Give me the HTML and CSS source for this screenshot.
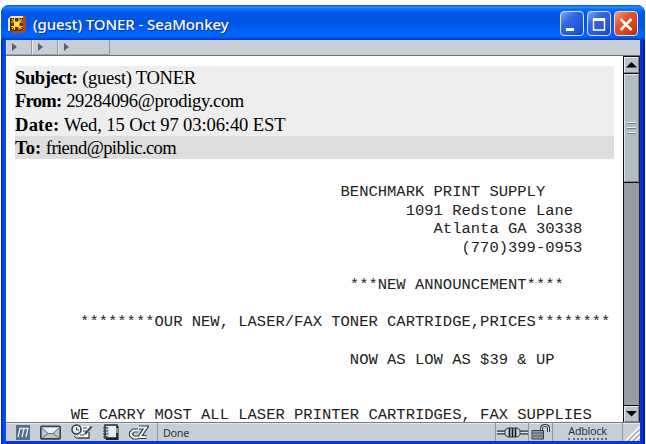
FILE: index.html
```html
<!DOCTYPE html>
<html lang="en">
<head>
<meta charset="utf-8">
<title>(guest) TONER - SeaMonkey</title>
<link rel="stylesheet" href="styles.css">
</head>
<body>
<div class="window">
  <header class="titlebar">
    <svg class="app-icon" width="18" height="18" viewBox="0 0 18 18">
      <path d="M3 1h14l1 1v13l-2 3H4z" fill="#b5481e"/>
      <path d="M0 4l3-3h12v3L4 16H0z" fill="#eadfc9"/>
      <path d="M2 3h13v12l-2 1H2z" fill="#5c2c14"/>
      <path d="M6.500 3v12M11 3v12M3 7h12M3 11.500h12M4 4l10 10M14 4L4 14" stroke="#ffc81e" stroke-width="1.100"/>
      <path d="M6.500 7H11v4.500H6.500z" fill="#ffee3c"/>
    </svg>
    <h1 class="title">(guest) TONER - SeaMonkey</h1>
    <div class="controls">
      <button class="control" aria-label="Minimize"><svg width="24" height="24"><path d="M6 16h8v3H6z" fill="#fff"/></svg></button>
      <button class="control" aria-label="Maximize"><svg width="24" height="24"><path d="M6.500 7h11v11h-11z" fill="none" stroke="#fff" stroke-width="1.400"/><path d="M6 7.500h12" stroke="#fff" stroke-width="3"/></svg></button>
      <button class="control close" aria-label="Close"><svg width="24" height="24"><path d="M6.500 7l11 11M17.500 7l-11 11" stroke="#fff" stroke-width="2.500"/></svg></button>
    </div>
  </header>
  <div class="toolbar">
    <span class="grip"></span><span class="grip"></span><span class="grip wide"></span>
  </div>
  <main class="content">
    <div class="message">
      <div class="headers">
        <div class="field subject"><b>Subject:</b> <span>(guest) TONER</span></div>
        <div class="field from"><b>From:</b> <span>29284096@prodigy.com</span></div>
        <div class="field date"><b>Date:</b> <span>Wed, 15 Oct 97 03:06:40 EST</span></div>
        <div class="field to"><b>To:</b> <span>friend@piblic.com</span></div>
      </div>
<pre class="body">
                                   BENCHMARK PRINT SUPPLY
                                          1091 Redstone Lane
                                             Atlanta GA 30338
                                                (770)399-0953

                                    ***NEW ANNOUNCEMENT****

       ********OUR NEW, LASER/FAX TONER CARTRIDGE,PRICES********

                                    NOW AS LOW AS $39 &amp; UP


      WE CARRY MOST ALL LASER PRINTER CARTRIDGES, FAX SUPPLIES</pre>
    </div>
    <div class="scrollbar">
      <div class="arrow"><svg width="15" height="15"><path d="M2 10.500h11L7.500 5z" fill="#000"/></svg></div>
      <div class="thumb"><i></i><i></i><i></i></div>
      <div class="track"></div>
      <div class="arrow"><svg width="15" height="15"><path d="M2 5h11L7.500 10.500z" fill="#000"/></svg></div>
    </div>
  </main>
  <footer class="statusbar">
    <div class="components">
      <svg width="14" height="15" viewBox="0 0 14 15"><path d="M0 0h14v15H0z" fill="#56708b"/><path d="M2 12l2-8.500h8L10 12M7.800 4L6 12" fill="none" stroke="#e4edf5" stroke-width="1.300"/></svg>
      <svg width="21" height="15" viewBox="0 0 21 15"><rect x=".8" y="1.300" width="19.400" height="12.600" rx="1" fill="#b9c6cf" stroke="#36434b" stroke-width="1.600"/><path d="M3 3l5 5h5l5-5z" fill="#edf2f5"/><path d="M2 3l6 5.500h5L19 3M2 13l6-4.500M19 13l-6-4.500" fill="none" stroke="#63727c"/></svg>
      <svg width="22" height="16" viewBox="0 0 22 16"><path d="M8 2h10v12H7z" fill="#f4f6f7"/><path d="M7 14h11V8" fill="none" stroke="#374149" stroke-width="1.300"/><circle cx="5.500" cy="5.500" r="4.500" fill="#e6ecef" stroke="#384148" stroke-width="1.600"/><path d="M5.500 3v3H8M3 12l2 2h2M9 11h4M12 4h4M12 7h3" fill="none" stroke="#424c52"/><path d="M13 11l1-3 6-6 1.500 1-6 7z" fill="#414b52"/></svg>
      <svg width="16" height="16" viewBox="0 0 16 16"><path d="M2 1h12v13H2z" fill="#c6d0dc" stroke="#232f37" stroke-width="1.500"/><path d="M6 2h7v11H6z" fill="#e4ebf1"/><path d="M0 4h5M0 7h5M0 10h5M0 13h5" stroke="#303941"/><path d="M14.500 2v13H3" fill="none" stroke="#172530" stroke-width="2"/><path d="M14 4v5" stroke="#bdb74d" stroke-width="1.500"/></svg>
      <svg width="20" height="16" viewBox="0 0 20 16"><path d="M9 6.500H4.500L2 9v2l2.500 2.500H9M10 3.500h7l-6.500 9.500H17.500" fill="none" stroke="#34424b" stroke-width="4.200"/><path d="M9 6.500H4.500L2 9v2l2.500 2.500H9M10 3.500h7l-6.500 9.500H17.500" fill="none" stroke="#edf2f5" stroke-width="1.900"/></svg>
    </div>
    <div class="status">Done</div>
    <div class="cell plug"><svg width="31" height="13" viewBox="0 0 31 13"><path d="M0 6.500h9M22 6.500h9" stroke="#252c31" stroke-width="4"/><path d="M0 6.500h9M22 6.500h9" stroke="#e4eaef" stroke-width="1.400"/><path d="M8 4l3-2h9l3 2v5l-3 2h-9L8 9z" fill="#cbd3db" stroke="#343c42"/><path d="M12.500 2v9M15.500 2v9M18.500 2v9" stroke="#11171a" stroke-width="1.600"/></svg></div>
    <div class="cell lock"><svg width="19" height="16" viewBox="0 0 19 16"><path d="M10.500 7V4q0-2.500 3.500-2.500T17.500 4v4" fill="none" stroke="#343e45" stroke-width="3"/><path d="M10.500 7V4q0-2.500 3.500-2.500T17.500 4v4" fill="none" stroke="#e0e6eb"/><path d="M1 6.500h11.500v8.500H1z" fill="#8f9da9" stroke="#343e45"/><path d="M2 9h10M2 12h10" stroke="#4d5a64"/></svg></div>
    <div class="cell adblock"><span>Adblock</span></div>
    <svg class="resize" width="18" height="18" viewBox="0 0 17 18"><path d="M3 18L17 4M8 18l9-9M13 18l4-4" stroke="#fff" stroke-width="2"/><path d="M4.500 18L17 5.500M9.500 18l7.500-7.500M14.500 18l2.500-2.500" stroke="#7c8791"/></svg>
  </footer>
</div>
</body>
</html>
```
FILE: styles.css
```css
* { box-sizing: border-box; }
body { margin: 0; padding: 5px 1px 0; height: 444px; background: #fff; overflow: hidden; }
.window { height: 439px; display: flex; flex-direction: column; padding: 0 5px 3px; background: linear-gradient(90deg, #001dce, #0640ed 2px, #0951f5 4px, #0636d7 6px, #0636d7 calc(100% - 5px), #0831d8 calc(100% - 3px), #0014a0); border-radius: 8px 8px 0 0; overflow: hidden; }
.titlebar { height: 35px; flex: none; display: flex; align-items: center; margin: 0 -5px; padding: 2px 7px 0; background: linear-gradient(#0757da, #258bff 2px, #0876fa 4px, #0058e8 8px, #0055e4 19px, #0066ff 29px, #0060f8 32px, #0038c0); }
.title { margin: 0 0 0 7px; flex: 1; color: #fff; font: 500 15px/20px "Noto Sans", sans-serif; letter-spacing: -.1px; text-shadow: 1px 1px #092f91; white-space: nowrap; }
.app-icon { flex: none; }
.controls { display: flex; gap: 3px; }
.control { width: 24px; height: 25px; padding: 0; border: 1px solid #d4e1ff; border-radius: 4px; background: linear-gradient(135deg, #82a5f5, #3566df 35%, #2457d9 75%, #1741b5); }
.control svg { display: block; margin: -1px; }
.control.close { background: linear-gradient(135deg, #f29b82, #e2512b 40%, #d24016 75%, #a92d0a); }
.toolbar { height: 16px; flex: none; display: flex; background: #c7ced8; border-bottom: 1px solid #697079; }
.grip { width: 26px; border-right: 1px solid #8e98a3; border-left: 1px solid #e2e8ef; border-bottom: 1px solid #96a0aa; padding: 3px 0 0 5px; }
.grip::before { content: ""; display: block; width: 0; border-left: 5px solid #56616b; border-top: 4px solid transparent; border-bottom: 4px solid transparent; }
.grip.wide { width: 52px; }
.content { flex: 1; min-height: 0; display: flex; background: #fff; }
.message { flex: 1; min-width: 0; padding: 10px 9px 0; }
.headers { width: 599px; background: #eee; font: 18.6px/23.3px "Liberation Serif", serif; color: #000; }
.field { height: 23.3px; white-space: nowrap; }
.subject b { letter-spacing: -.45px; }
.subject span { letter-spacing: -.3px; }
.from b { letter-spacing: -.75px; }
.from span { letter-spacing: -.35px; }
.date b { letter-spacing: .2px; }
.date span { letter-spacing: -.12px; }
.field.to { background: #ddd; }
.to span { letter-spacing: -.6px; }
.body { margin: 24px 0 0; font: 15.5px/18.6px "Liberation Mono", monospace; color: #222; }
.scrollbar { width: 17px; flex: none; display: flex; flex-direction: column; border-left: 1px solid #111; border-right: 1px solid #222; background: #111; gap: 1px; padding-top: 1px; }
.arrow { height: 16px; flex: none; background: #b9c3cd; border: 1px solid #e6ebf0; border-right-color: #75818e; border-bottom-color: #75818e; }
.arrow svg { display: block; margin: -1px; }
.thumb { height: 108px; flex: none; background: #b2bcc8; border: 1px solid #dce4ec; border-right-color: #77838f; border-bottom-color: #77838f; display: flex; flex-direction: column; align-items: center; justify-content: center; gap: 3px; }
.thumb i { width: 9px; height: 2px; border-top: 1px solid #e8edf2; border-bottom: 1px solid #6e7e8d; }
.track { flex: 1; background: #969da6; }
.statusbar { height: 19px; flex: none; display: flex; align-items: center; background: #c7ced8; border-top: 1px solid #747c86; box-shadow: inset 0 1px #e1e7ed; font: 10.8px/16px "Noto Sans", sans-serif; color: #30363c; }
.components { width: 151px; flex: none; display: flex; align-items: center; gap: 10px; padding-left: 10px; }
.status { flex: 1; align-self: stretch; padding: 2px 0 0 5px; border-left: 1px solid #8e98a3; }
.status { letter-spacing: -.3px; }
.cell { align-self: stretch; flex: none; display: flex; align-items: center; justify-content: center; border-left: 1px solid #8e98a3; }
.plug { width: 33px; }
.lock { width: 24px; }
.adblock { width: 70px; }
.adblock span { line-height: 14px; letter-spacing: -.3px; border-bottom: 2px dotted #68727c; }
.resize { flex: none; border-left: 1px solid #8e98a3; }
```
